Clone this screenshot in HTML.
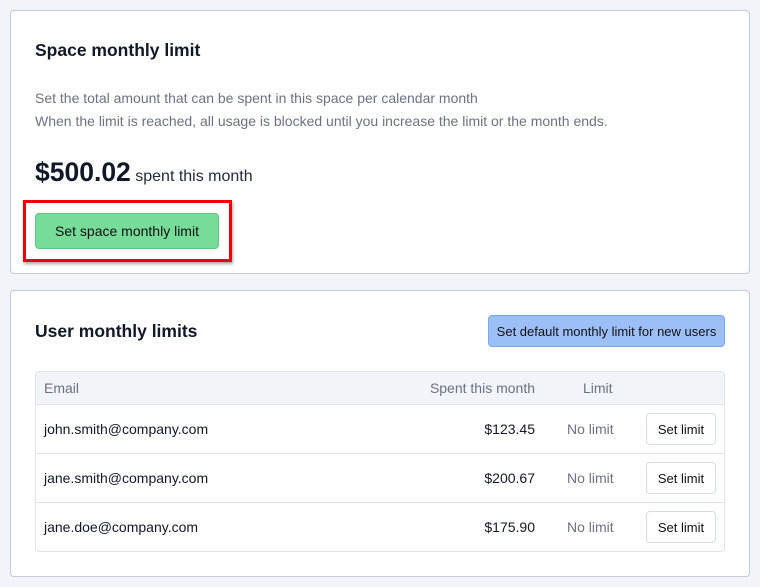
<!DOCTYPE html><html><head><style>
*{box-sizing:border-box;margin:0;padding:0}
body{width:760px;height:587px;background:#f1f4f9;font-family:"Liberation Sans",sans-serif;position:relative;overflow:hidden;color:#111827}
.card{position:absolute;left:10px;width:740px;background:#fff;border:1px solid #c5cad6;border-radius:4px}
.a{position:absolute;white-space:nowrap}
h2{font-size:17.5px;font-weight:bold;color:#111827}
.btn{position:absolute;border-radius:4px;font-size:13px;display:flex;align-items:center;justify-content:center;color:#111}
</style></head><body>
<div class="card" style="top:10px;height:264px"></div>
<h2 class="a" style="left:35px;top:40px">Space monthly limit</h2>
<div class="a" style="left:35px;top:87px;font-size:14px;color:#6b7280;line-height:23px">Set the total amount that can be spent in this space per calendar month<br>When the limit is reached, all usage is blocked until you increase the limit or the month ends.</div>
<div class="a" style="left:35px;top:157px"><span style="font-size:26.5px;font-weight:bold">$500.02</span> <span style="font-size:16px;color:#1f2937">spent this month</span></div>
<div class="a" style="left:23px;top:200px;width:209px;height:62px;border:3px solid #e00;box-shadow:1px 2px 3px rgba(0,0,0,.35)"></div>
<div class="btn" style="left:35px;top:213px;width:184px;height:36px;background:#77db9a;border:1px solid #63c584;font-size:14px">Set space monthly limit</div>

<div class="card" style="top:290px;height:287px"></div>
<h2 class="a" style="left:35px;top:321px">User monthly limits</h2>
<div class="btn" style="left:488px;top:315px;width:237px;height:32px;background:#9dbff9;border:1px solid #7ca6f2">Set default monthly limit for new users</div>
<div class="a" style="left:35px;top:371px;width:690px;height:181px;border:1px solid #e0e4ea;border-radius:4px;overflow:hidden">
<div style="height:33px;background:#f1f4f9;border-bottom:1px solid #e0e4ea"></div>
<div style="height:49px;border-bottom:1px solid #e0e4ea"></div>
<div style="height:49px;border-bottom:1px solid #e0e4ea"></div>
</div>
<div class="a" style="left:44px;top:380px;font-size:14px;color:#6b7280">Email</div>
<div class="a" style="right:225px;top:380px;font-size:14px;color:#6b7280">Spent this month</div>
<div class="a" style="left:583px;top:380px;font-size:14px;color:#6b7280">Limit</div>

<div class="a" style="left:44px;top:421px;font-size:14px">john.smith@company.com</div>
<div class="a" style="right:225px;top:421px;font-size:14px">$123.45</div>
<div class="a" style="left:567px;top:421px;font-size:14px;color:#6b7280">No limit</div>
<div class="btn" style="left:646px;top:413px;width:70px;height:32px;border:1px solid #d6dbe4;background:#fff">Set limit</div>

<div class="a" style="left:44px;top:470px;font-size:14px">jane.smith@company.com</div>
<div class="a" style="right:225px;top:470px;font-size:14px">$200.67</div>
<div class="a" style="left:567px;top:470px;font-size:14px;color:#6b7280">No limit</div>
<div class="btn" style="left:646px;top:462px;width:70px;height:32px;border:1px solid #d6dbe4;background:#fff">Set limit</div>

<div class="a" style="left:44px;top:519px;font-size:14px">jane.doe@company.com</div>
<div class="a" style="right:225px;top:519px;font-size:14px">$175.90</div>
<div class="a" style="left:567px;top:519px;font-size:14px;color:#6b7280">No limit</div>
<div class="btn" style="left:646px;top:511px;width:70px;height:32px;border:1px solid #d6dbe4;background:#fff">Set limit</div>
</body></html>
